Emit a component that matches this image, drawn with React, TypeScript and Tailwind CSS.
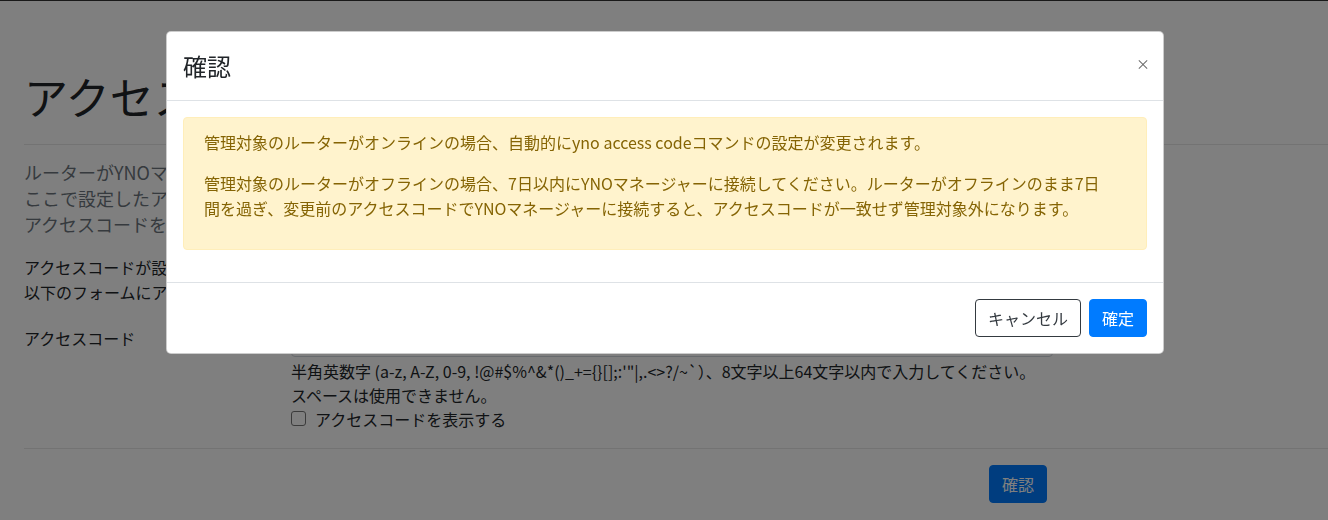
import React from 'react';

const font = { fontFamily: '"Noto Sans CJK JP", "Noto Sans", sans-serif' };

function Page() {
    return (
        <div className="w-[1328px] h-[520px] overflow-hidden bg-white text-[#212529]">
            <div className="h-px bg-[#333]" />
            <div className="pl-6">
                <h1 className="mt-[69px] text-[44px] leading-[1.2] font-normal whitespace-nowrap">アクセスコード設定</h1>
                <div className="mt-[21px] border-t border-[#e6e6e6]" />
                <p className="mt-[14px] text-[18px] leading-[26px] text-[#6c757d]">
                    ルーターがYNOマネージャーに接続するためのアクセスコードを設定します。<br />
                    ここで設定したアクセスコードは管理対象のすべてのルーターに適用されます。<br />
                    アクセスコードを変更する場合は十分に注意してください。
                </p>
                <p className="mt-[18px] text-base leading-[25px]">
                    アクセスコードが設定されていない場合は管理対象にできません。<br />
                    以下のフォームにアクセスコードを入力してください。
                </p>
                <div className="mt-[14px] flex">
                    <label className="w-[267px] pt-[7px] text-base leading-6">アクセスコード</label>
                    <div className="w-[762px]">
                        <div className="h-[38px] rounded border border-[#ced4da] bg-white" />
                        <div className="mt-[2px] text-base leading-6 whitespace-nowrap">
                            半角英数字 (a-z, A-Z, 0-9, !@#$%^&amp;*()_+={'{}'}[];:'"|,.&lt;&gt;?/~`）、8文字以上64文字以内で入力してください。
                        </div>
                        <div className="text-base leading-6">スペースは使用できません。</div>
                        <div className="flex items-center text-base leading-6">
                            <span className="w-[15px] h-[15px] rounded-[3px] border border-[#767676] bg-white" />
                            <span className="ml-[9px]">アクセスコードを表示する</span>
                        </div>
                    </div>
                </div>
                <div className="mt-[17px] border-t border-[#e6e6e6]" />
                <div className="mt-4 pl-[965px]">
                    <button className="px-3 py-1.5 text-base leading-6 text-white bg-[#007bff] border border-[#007bff] rounded">確認</button>
                </div>
            </div>
        </div>
    );
}

function ConfirmModal() {
    return (
        <div className="fixed inset-0 bg-black/50">
            <div className="pt-[31px] pl-[2px] flex justify-center">
                <div className="w-[998px] bg-white border border-black/20 rounded-[5px] text-[#212529]">
                    <div className="flex items-center justify-between px-4 py-4 border-b border-[#dee2e6]">
                        <h5 className="text-2xl leading-9 font-normal">確認</h5>
                        <button className="-mr-[3px] mb-[6px] text-[14px] leading-none text-black/60">×</button>
                    </div>
                    <div className="p-4">
                        <div className="mb-4 px-5 py-3 rounded border border-[#ffeeba] bg-[#fff3cd] text-[#856404] text-base leading-[25px]">
                            <p className="mb-4">管理対象のルーターがオンラインの場合、自動的にyno access codeコマンドの設定が変更されます。</p>
                            <p className="mb-4">管理対象のルーターがオフラインの場合、7日以内にYNOマネージャーに接続してください。ルーターがオフラインのまま7日<br />間を過ぎ、変更前のアクセスコードでYNOマネージャーに接続すると、アクセスコードが一致せず管理対象外になります。</p>
                        </div>
                    </div>
                    <div className="flex justify-end items-center gap-2 p-4 border-t border-[#dee2e6]">
                        <button className="px-3 py-1.5 text-base leading-6 text-[#343a40] border border-[#343a40] rounded bg-white">キャンセル</button>
                        <button className="px-3 py-1.5 text-base leading-6 text-white bg-[#007bff] border border-[#007bff] rounded">確定</button>
                    </div>
                </div>
            </div>
        </div>
    );
}

export default function App() {
    return (
        <div style={font} className="relative">
            <Page />
            <ConfirmModal />
        </div>
    );
}
